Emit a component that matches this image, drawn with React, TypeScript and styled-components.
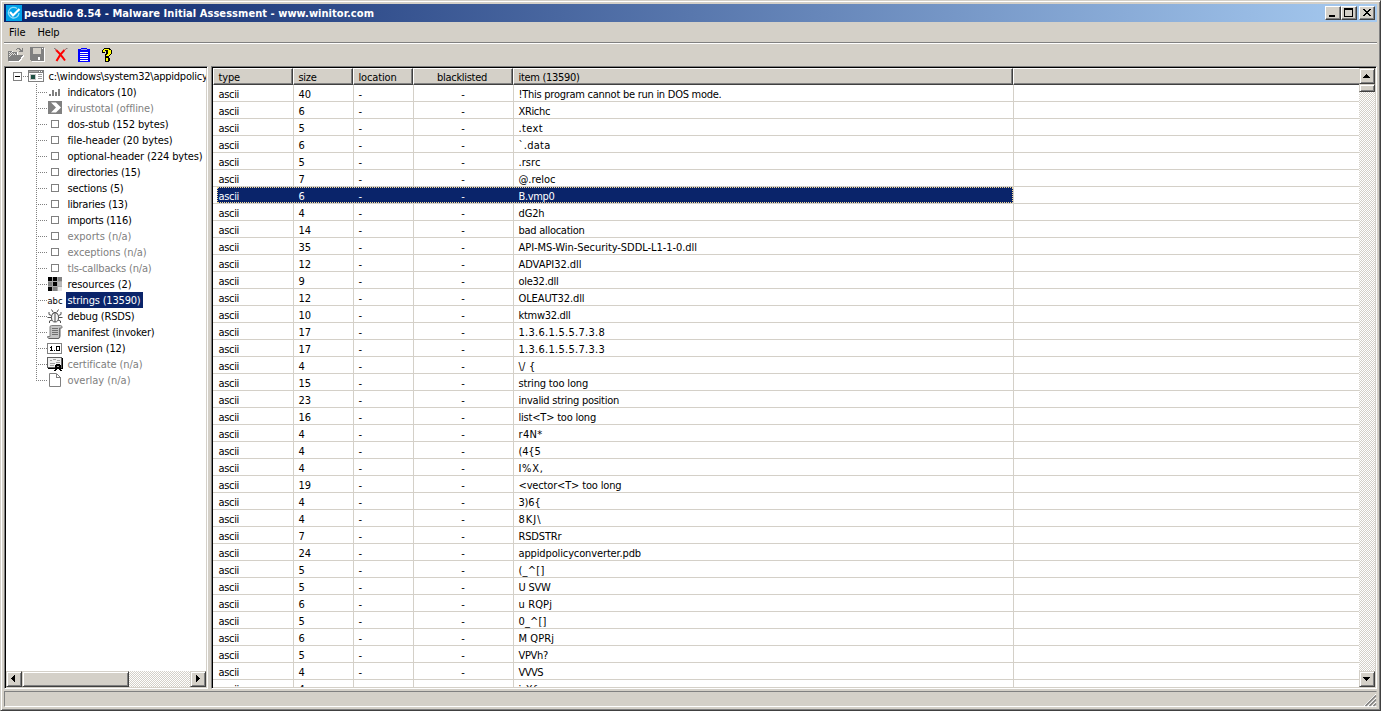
import React, { useLayoutEffect, useRef, useState } from "react";
import styled, { createGlobalStyle, css } from "styled-components";

const FACE = "#d4d0c8";
const SHADOW = "#808080";
const DARK = "#404040";
const NAVY = "#0a246a";

const GlobalStyle = createGlobalStyle`
  * { box-sizing: border-box; }
  html, body { margin: 0; padding: 0; overflow: hidden; background: ${FACE}; }
  body {
    font-family: "DejaVu Sans Condensed", "DejaVu Sans", sans-serif;
    font-size: 11px;
    color: #000;
    cursor: default;
  }
  svg { display: block; flex: none; overflow: visible; }
`;

const raised = css`
  background: ${FACE};
  border: 1px solid;
  border-color: ${FACE} ${DARK} ${DARK} ${FACE};
  box-shadow: inset 1px 1px 0 #fff, inset -1px -1px 0 ${SHADOW};
`;

const raisedButton = css`
  background: ${FACE};
  border: 1px solid;
  border-color: #fff ${DARK} ${DARK} #fff;
  box-shadow: inset -1px -1px 0 ${SHADOW};
`;

/* ---------- text set to a fixed advance ---------- */

const Run = styled.span`
  white-space: pre;
  display: inline-block;
`;

function Label({ text, width }: { text: string; width: number }) {
  const ref = useRef<HTMLSpanElement>(null);
  const [spacing, setSpacing] = useState(0);
  useLayoutEffect(() => {
    const natural = ref.current!.getBoundingClientRect().width;
    setSpacing((width - natural) / text.length);
  }, [text, width]);
  return (
    <Run ref={ref} style={{ letterSpacing: `${spacing}px` }}>
      {text}
    </Run>
  );
}

/* ---------- window frame ---------- */

const Frame = styled.div`
  width: 1381px;
  height: 711px;
  display: flex;
  flex-direction: column;
  overflow: hidden;
  ${raised}
  padding: 3px;
`;

const TitleBar = styled.header`
  height: 18px;
  flex: none;
  display: flex;
  align-items: center;
  padding: 0 2px;
  color: #fff;
  font-weight: 700;
  background: linear-gradient(90deg, ${NAVY}, #a6caf0);
`;

const TitleText = styled.div`
  flex: 1;
  padding-left: 2px;
  line-height: 18px;
  height: 16px;
`;

const CaptionButton = styled.div<{ $gap?: boolean }>`
  width: 16px;
  height: 14px;
  margin-left: ${(p) => (p.$gap ? 2 : 0)}px;
  ${raisedButton}
`;

const MenuBar = styled.nav`
  height: 22px;
  flex: none;
  display: flex;
  gap: 12px;
  padding: 0 5px;
  line-height: 21px;
  border-bottom: 1px solid #fff;
  box-shadow: inset 0 -1px 0 ${SHADOW};
`;

const ToolBar = styled.div`
  height: 22px;
  flex: none;
  display: flex;
  gap: 7px;
  padding: 3px 0 0 3px;
`;

const Panels = styled.main`
  height: 623px;
  flex: none;
  display: flex;
  gap: 3px;
`;

const Sunken = styled.section<{ $width?: number }>`
  ${(p) => (p.$width ? `width: ${p.$width}px;` : "flex: 1;")}
  min-width: 0;
  height: 623px;
  display: flex;
  padding: 1px;
  background: #fff;
  border: 1px solid;
  border-color: ${SHADOW} #fff #fff ${SHADOW};
  box-shadow: inset 1px 1px 0 #000, inset -1px -1px 0 ${FACE};
`;

const StatusBar = styled.footer`
  height: 16px;
  margin-top: 2px;
  flex: none;
  display: flex;
  justify-content: flex-end;
  align-items: flex-end;
  border: 1px solid;
  border-color: ${SHADOW} ${FACE} #fff ${SHADOW};
`;

/* ---------- scroll bars ---------- */

const Track = styled.div<{ $vertical?: boolean }>`
  flex: none;
  display: flex;
  flex-direction: ${(p) => (p.$vertical ? "column" : "row")};
  ${(p) => (p.$vertical ? "width: 16px; height: 619px;" : "height: 16px; width: 200px;")}
  background: repeating-conic-gradient(#fff 0 25%, ${FACE} 0 50%) 0 0 / 2px 2px;
`;

const ArrowButton = styled.div`
  width: 16px;
  height: 16px;
  flex: none;
  ${raised}
`;

const Thumb = styled.div<{ $w: number; $h: number }>`
  width: ${(p) => p.$w}px;
  height: ${(p) => p.$h}px;
  flex: none;
  ${raised}
`;

const Spacer = styled.div`
  flex: 1;
`;

function Arrow({ points }: { points: string }) {
  return (
    <svg width="14" height="14" viewBox="0 0 14 14" shapeRendering="crispEdges">
      <path d={points} fill="#000" />
    </svg>
  );
}

/* ---------- tree ---------- */

const TreeColumn = styled.div`
  width: 200px;
  display: flex;
  flex-direction: column;
  overflow: hidden;
`;

const TreeRow = styled.div<{ $root?: boolean }>`
  height: 16px;
  flex: none;
  display: flex;
  padding-left: ${(p) => (p.$root ? 7 : 30)}px;
`;

const TreeLabel = styled.div<{ $muted?: boolean; $selected?: boolean }>`
  height: 16px;
  line-height: 17px;
  white-space: nowrap;
  margin-left: 3px;
  padding: 0 2.5px 0 1.5px;
  color: ${(p) => (p.$selected ? "#fff" : p.$muted ? SHADOW : "#000")};
  background: ${(p) => (p.$selected ? NAVY : "transparent")};
`;

const Branch = styled.svg.attrs({ width: 11, height: 16, viewBox: "0 0 11 16", shapeRendering: "crispEdges" })``;

type IconName =
  | "bars" | "vt" | "box" | "grid" | "abc" | "bug" | "scroll" | "ver" | "cert" | "page" | "app";

function TreeIcon({ name }: { name: IconName }) {
  const shapes: Record<IconName, React.ReactNode> = {
    app: (
      <>
        <path d="M0 2h16v12H0z" fill="#808080" />
        <path d="M1 5h14v8H1z" fill="#fff" />
        <path d="M1 3h9v1H1z" fill="#a8a8a8" />
        <path d="M11 3h1v1h-1zM13 3h1v1h-1z" fill="#fff" />
        <path d="M2 6h6v6H2z" fill="#c8c8c8" />
        <path d="M3 7h4v4H3z" fill="#1d4f42" />
        <path d="M10 6h4v1h-4zM10 8h4v1h-4zM10 10h4v1h-4z" fill="#a0a0a0" />
      </>
    ),
    bars: <path d="M2 10h2v2H2zM5 6h2v6H5zM8 8h2v4H8zM11 5h2v7h-2z" fill="#808080" />,
    vt: (
      <>
        <path d="M1 1h14v13H1z" fill="#808080" />
        <path d="M4 2.500h5l5 5-5 5H4l5-5z" fill="#fff" shapeRendering="auto" />
      </>
    ),
    box: <path d="M4.500 4.500h7v7h-7z" fill="#fff" stroke="#808080" />,
    grid: (
      <>
        <path d="M1 1h14v14H1z" fill="#a8a8a8" />
        <path d="M1 1h4v4H1zM6 1h4v4H6zM6 6h4v4H6zM1 11h4v4H1z" fill="#000" />
        <path d="M11 1h4v4h-4zM1 6h4v4H1zM6 11h4v4H6z" fill="#808080" />
        <path d="M11 6h4v4h-4z" fill="#b8b8b8" />
        <path d="M11 11h4v4h-4z" fill="#e4e4e4" />
      </>
    ),
    abc: (
      <text x="0.500" y="12" fontSize="9.500" fontFamily="DejaVu Sans" textLength="15" lengthAdjust="spacingAndGlyphs">
        abc
      </text>
    ),
    bug: (
      <g fill="none" stroke="#505050" shapeRendering="auto">
        <ellipse cx="8" cy="9.500" rx="3.500" ry="4.500" fill="#f4f4f4" />
        <path d="M8 6v8M5.500 5.500Q8 3 10.500 5.500M6 4L4.500 1.500M10 4l1.500-2.500M4.500 7.500L2 6.500V4M11.500 7.500l2.500-1V4M4.500 9.500H0.500M11.500 9.500h4M5 12l-2.500 1v2M11 12l2.500 1v2" />
      </g>
    ),
    scroll: (
      <g shapeRendering="auto">
        <path d="M4.500 1.500h9q1.500 0 1.500 1.500v1h-2.500v8.500q0 2-1.500 2H2q-1.500 0-1.500-2H3V3q0-1.500 1.500-1.500z" fill="#c4c4c4" stroke="#808080" />
        <path d="M5 4.500h6M5 6.500h6M5 8.500h6M5 10.500h6" stroke="#707070" />
        <path d="M2 14.500h9.500q1.500-.5 1.500-2.500V4" fill="none" stroke="#606060" />
      </g>
    ),
    ver: (
      <>
        <path d="M0.500 3.500h14v10H0.500z" fill="#fff" stroke="#808080" />
        <path d="M4 6h1v5H4zM3 7h1v1H3zM7 10h1v1H7zM10 6h2v1h-2zM10 10h2v1h-2zM9 6h1v5H9zM12 6h1v5h-1zM3 10h3v1H3z" fill="#000" />
      </>
    ),
    cert: (
      <>
        <path d="M0.500 1.500h14v10H0.500z" fill="#f0f0f0" stroke="#606060" />
        <path d="M15 2h1v11h-1zM1 12h14v1H1z" fill="#000" />
        <path d="M3 4h2v1H3zM6 3h3v1H6zM10 4h3v1h-3zM3 7h5v1H3zM3 9h4v1H3zM9 6h4v1H9z" fill="#a0a0a0" />
        <path d="M9 8h4v1H9zM8 9h6v3H8zM9 12h4v1H9zM8 13h2v1H8zM12 13h2v1h-2zM7 14h2v1H7zM13 14h2v1h-2z" fill="#000" />
        <path d="M10 10h2v1h-2z" fill="#999" />
      </>
    ),
    page: (
      <>
        <path d="M2.500 1.500h7l4 4v9h-11z" fill="#fff" stroke="#808080" shapeRendering="auto" />
        <path d="M9.500 1.500v4h4" fill="none" stroke="#808080" />
      </>
    ),
  };
  return (
    <svg width="16" height="16" viewBox="0 0 16 16" shapeRendering="crispEdges">
      {shapes[name]}
    </svg>
  );
}

interface Node {
  text: string;
  width: number;
  icon: IconName;
  muted?: boolean;
  selected?: boolean;
}

const nodes: Node[] = [
  { text: "indicators (10)", width: 69, icon: "bars" },
  { text: "virustotal (offline)", width: 86, icon: "vt", muted: true },
  { text: "dos-stub (152 bytes)", width: 101, icon: "box" },
  { text: "file-header (20 bytes)", width: 105, icon: "box" },
  { text: "optional-header (224 bytes)", width: 135, icon: "box" },
  { text: "directories (15)", width: 73, icon: "box" },
  { text: "sections (5)", width: 56, icon: "box" },
  { text: "libraries (13)", width: 60, icon: "box" },
  { text: "imports (116)", width: 64, icon: "box" },
  { text: "exports (n/a)", width: 64, icon: "box", muted: true },
  { text: "exceptions (n/a)", width: 79, icon: "box", muted: true },
  { text: "tls-callbacks (n/a)", width: 84, icon: "box", muted: true },
  { text: "resources (2)", width: 64, icon: "grid" },
  { text: "strings (13590)", width: 73, icon: "abc", selected: true },
  { text: "debug (RSDS)", width: 67, icon: "bug" },
  { text: "manifest (invoker)", width: 87, icon: "scroll" },
  { text: "version (12)", width: 58, icon: "ver" },
  { text: "certificate (n/a)", width: 75, icon: "cert", muted: true },
  { text: "overlay (n/a)", width: 63, icon: "page", muted: true },
];

/* ---------- table ---------- */

const TableColumn = styled.div`
  flex: 1;
  min-width: 0;
  height: 619px;
  overflow: hidden;
`;

const columns = "80px 60px 60px 100px 500px 1fr";

const HeaderRow = styled.div`
  height: 17px;
  display: grid;
  grid-template-columns: ${columns};
`;

const HeaderCell = styled.div<{ $center?: boolean }>`
  height: 17px;
  background: ${FACE};
  border: 1px solid;
  border-color: #fff ${DARK} ${DARK} #fff;
  box-shadow: inset -1px -1px 0 ${SHADOW};
  line-height: 17px;
  padding: ${(p) => (p.$center ? "0 2px 0 0" : "0 0 0 4.5px")};
  text-align: ${(p) => (p.$center ? "center" : "left")};
  &:last-child { border-right: 0; box-shadow: inset 0 -1px 0 ${SHADOW}; }
`;

const Row = styled.div`
  height: 17px;
  display: grid;
  grid-template-columns: ${columns};
  grid-template-rows: 16px;
  line-height: 19px;
  border-bottom: 1px solid ${FACE};
`;

const Cell = styled.div<{ $center?: boolean }>`
  height: 16px;
  white-space: nowrap;
  padding: ${(p) => (p.$center ? "0 1px 0 0" : "0 0 0 4.5px")};
  text-align: ${(p) => (p.$center ? "center" : "left")};
  border-left: 1px solid ${FACE};
  &:first-child { border-left: 0; padding-left: 5.5px; }
`;

const SelectedBand = styled.div`
  height: 16px;
  grid-column: 1 / 6;
  display: grid;
  grid-template-columns: 76px 60px 60px 100px 500px;
  margin-left: 4px;
  color: #fff;
  background: ${NAVY};
  outline: 1px dotted #f5db95;
  outline-offset: -1px;
  ${Cell} { border-left-color: transparent; }
  ${Cell}:first-child { padding-left: 1.5px; }
`;

const strings: [string, string, number][] = [
  ["40", "!This program cannot be run in DOS mode.", 203],
  ["6", "XRichc", 31.5],
  ["5", ".text", 24.5],
  ["6", "`.data", 32],
  ["5", ".rsrc", 22],
  ["7", "@.reloc", 37],
  ["6", "B.vmp0", 36],
  ["4", "dG2h", 26],
  ["14", "bad allocation", 66],
  ["35", "API-MS-Win-Security-SDDL-L1-1-0.dll", 178.5],
  ["12", "ADVAPI32.dll", 63],
  ["9", "ole32.dll", 40],
  ["12", "OLEAUT32.dll", 66],
  ["10", "ktmw32.dll", 52],
  ["17", "1.3.6.1.5.5.7.3.8", 86.5],
  ["17", "1.3.6.1.5.5.7.3.3", 86.5],
  ["4", "\\/ {", 17],
  ["15", "string too long", 69.5],
  ["23", "invalid string position", 100.5],
  ["16", "list<T> too long", 77.5],
  ["4", "r4N*", 24],
  ["4", "(4{5", 22],
  ["4", "I%X,", 25],
  ["19", "<vector<T> too long", 103],
  ["4", "3)6{", 22],
  ["4", "8KJ\\", 23],
  ["7", "RSDSTRr", 43],
  ["24", "appidpolicyconverter.pdb", 122.5],
  ["5", "(_^[]", 26],
  ["5", "U SVW", 32],
  ["6", "u RQPj", 33.5],
  ["5", "0_^[]", 28],
  ["6", "M QPRj", 35.5],
  ["5", "VPVh?", 29.5],
  ["4", "VVVS", 24.5],
  ["4", "j Xf", 19],
];

function Cells({ size, item, width }: { size: string; item: string; width: number }) {
  return (
    <>
      <Cell><Label text="ascii" width={20.5} /></Cell>
      <Cell><Label text={size} width={size.length * 6.2} /></Cell>
      <Cell><Label text="-" width={4} /></Cell>
      <Cell $center>-</Cell>
      <Cell><Label text={item} width={width} /></Cell>
    </>
  );
}

/* ---------- tool bar drawings ---------- */

function AppLogo() {
  return (
    <svg width="16" height="16" viewBox="0 0 16 16">
      <path d="M0 0h16v16H0z" fill="#00a2e8" />
      <path d="M11 3.500A5.300 5.300 0 1 0 13 8" fill="none" stroke="#8fdcf8" strokeWidth="1.300" />
      <path d="M4 7l3 3.500L13.500 4" fill="none" stroke="#fff" strokeWidth="2.200" />
    </svg>
  );
}

function OpenIcon() {
  return (
    <svg width="15" height="16" viewBox="0 0 15 16" shapeRendering="crispEdges">
      <path d="M2 4h4v1h5v3h6v1l-4 6H2z" fill="#fff" />
      <path d="M1 4h4v1h5v3H5v1H4v2H3v2H2v1H1z" fill="#808080" />
      <path d="M2 5h1v1H2zM4 5h1v1H4zM3 6h1v1H3zM5 6h1v1H5zM7 6h1v1H7zM2 7h1v1H2zM4 7h1v1H4zM6 7h1v1H6zM8 7h1v1H8zM3 8h1v1H3zM2 9h1v1H2z" fill="#e4e2de" />
      <path d="M5 8h11v1h-1v1h-1v2h-1v1h-1v1H1v-1h1v-2h1v-2h2z" fill="#808080" />
      <path d="M9 2h1V1h3v1h1v1h1V1h1v4h-4V4h1V3h-1V2h-2v1H9z" fill="#808080" />
    </svg>
  );
}

function SaveIcon() {
  return (
    <svg width="17" height="16" viewBox="0 0 17 16" shapeRendering="crispEdges">
      <path d="M2 1h14v14H3l-1-1z" fill="#fff" />
      <path d="M1 0h14v14H2l-1-1z" fill="#808080" />
      <path d="M4 1h8v6H4z" fill={FACE} />
      <path d="M13 1h1v1h-1z" fill="#fff" />
      <path d="M9 10h2v3H9z" fill="#fff" />
    </svg>
  );
}

function DeleteIcon() {
  return (
    <svg width="16" height="16" viewBox="0 0 16 16">
      <path d="M3 3q4 3.500 9 10.500M11.500 3Q7 7 3.500 14" fill="none" stroke="#f00" strokeWidth="2" />
      <path d="M1 1h1.500v1H1zM13 1h1.500v1H13z" fill="#808080" />
      <path d="M2 2l1.500 1.300M13.300 1.800L11.500 3" stroke="#b06060" fill="none" />
    </svg>
  );
}

function ListIcon() {
  return (
    <svg width="16" height="16" viewBox="0 0 16 16" shapeRendering="crispEdges">
      <path d="M2 2h3V1h6v1h3v13H2z" fill="#00f" />
      <path d="M5 2h6v1H5z" fill="#9c9cf0" />
      <path d="M4 5h8v1H4zM4 7h8v1H4zM4 9h8v1H4zM4 11h8v1H4zM4 13h8v1H4z" fill="#fff" />
    </svg>
  );
}

function HelpIcon() {
  return (
    <svg width="16" height="16" viewBox="0 0 16 16" shapeRendering="crispEdges">
      <path d="M5 1h6v1h1v1h1v4h-1v1h-1v1h-1v1H6V7h1V6H3V3h1V2h1zM6 10h4v1h1v3h-1v1H6z" fill="#000" />
      <path d="M5 2h5v1h2v4h-1v1h-1v1H7V8h1V7h1V3H6v2H4V3h1zM7 11h2v3H7z" fill="#ff0" />
      <path d="M6 4h1v2H6z" fill={FACE} />
    </svg>
  );
}

export default function App() {
  return (
    <>
      <GlobalStyle />
      <Frame>
        <TitleBar>
          <AppLogo />
          <TitleText>
            <Label text="pestudio 8.54 - Malware Initial Assessment - www.winitor.com" width={350} />
          </TitleText>
          <CaptionButton>
            <svg width="14" height="12" shapeRendering="crispEdges"><path d="M3 8h6v2H3z" /></svg>
          </CaptionButton>
          <CaptionButton>
            <svg width="14" height="12" shapeRendering="crispEdges"><path fillRule="evenodd" d="M2 1h9v9H2zM3 3v6h7V3z" /></svg>
          </CaptionButton>
          <CaptionButton $gap>
            <svg width="14" height="12" shapeRendering="crispEdges">
              <path d="M3 2h2v1h1v1h2V3h1V2h2v1h-1v1H9v1H8v1h1v1h1v1h1v1H9V8H8V7H6v1H5v1H3V8h1V7h1V6h1V5H5V4H4V3H3z" />
            </svg>
          </CaptionButton>
        </TitleBar>
        <MenuBar>
          <Label text="File" width={16.5} />
          <Label text="Help" width={22} />
        </MenuBar>
        <ToolBar>
          <OpenIcon />
          <SaveIcon />
          <DeleteIcon />
          <ListIcon />
          <HelpIcon />
        </ToolBar>
        <Panels>
          <Sunken $width={204}>
            <TreeColumn>
              <TreeRow $root>
                <svg width="15" height="16" viewBox="0 0 15 16" shapeRendering="crispEdges">
                  <path d="M0.500 4.500h8v8h-8z" fill="#fff" stroke="#808080" />
                  <path d="M2 8h5v1H2z" fill="#000" />
                  <path d="M10 8h1v1h-1zM12 8h1v1h-1zM14 8h1v1h-1z" fill="#808080" />
                </svg>
                <TreeIcon name="app" />
                <TreeLabel><Label text="c:\windows\system32\appidpolicy" width={159} /></TreeLabel>
              </TreeRow>
              {nodes.map((n, i) => (
                <TreeRow key={n.text}>
                  <Branch>
                    <path
                      d={i === nodes.length - 1 ? "M0.5 0V9" : "M0.5 0V16"}
                      stroke="#808080"
                      strokeDasharray="1 1"
                    />
                    <path d="M2 8.5H11" stroke="#808080" strokeDasharray="1 1" />
                  </Branch>
                  <TreeIcon name={n.icon} />
                  <TreeLabel $muted={n.muted} $selected={n.selected}>
                    <Label text={n.text} width={n.width} />
                  </TreeLabel>
                </TreeRow>
              ))}
              <Spacer />
              <Track>
                <ArrowButton><Arrow points="M8 3v7H7V9H6V8H5V7H4V6h1V5h1V4h1V3z" /></ArrowButton>
                <Thumb $w={107} $h={16} />
                <Spacer />
                <ArrowButton><Arrow points="M5 3h1v1h1v1h1v1h1v1H8v1H7v1H6v1H5z" /></ArrowButton>
              </Track>
            </TreeColumn>
          </Sunken>
          <Sunken>
            <TableColumn>
              <HeaderRow>
                <HeaderCell><Label text="type" width={21.5} /></HeaderCell>
                <HeaderCell><Label text="size" width={18} /></HeaderCell>
                <HeaderCell><Label text="location" width={38} /></HeaderCell>
                <HeaderCell $center><Label text="blacklisted" width={50} /></HeaderCell>
                <HeaderCell><Label text="item (13590)" width={61} /></HeaderCell>
                <HeaderCell />
              </HeaderRow>
              {strings.map(([size, item, width], i) => (
                <Row key={i}>
                  {i === 6 ? (
                    <SelectedBand><Cells size={size} item={item} width={width} /></SelectedBand>
                  ) : (
                    <Cells size={size} item={item} width={width} />
                  )}
                  <Cell />
                </Row>
              ))}
            </TableColumn>
            <Track $vertical>
              <ArrowButton><Arrow points="M6 5h1v1h1v1h1v1h1v1H3V8h1V7h1V6h1z" /></ArrowButton>
              <Thumb $w={16} $h={8} />
              <Spacer />
              <ArrowButton><Arrow points="M3 5h7v1H9v1H8v1H7v1H6V8H5V7H4V6H3z" /></ArrowButton>
            </Track>
          </Sunken>
        </Panels>
        <StatusBar>
          <svg width="12" height="13" viewBox="0 0 12 13">
            <path d="M0 13L12 1M4 13l8-8M8 13l4-4" stroke="#fff" />
            <path d="M1.500 13L12 2.500M5.500 13L12 6.500M9.500 13l2.500-2.500" stroke="#808080" strokeWidth="1.500" />
          </svg>
        </StatusBar>
      </Frame>
    </>
  );
}
